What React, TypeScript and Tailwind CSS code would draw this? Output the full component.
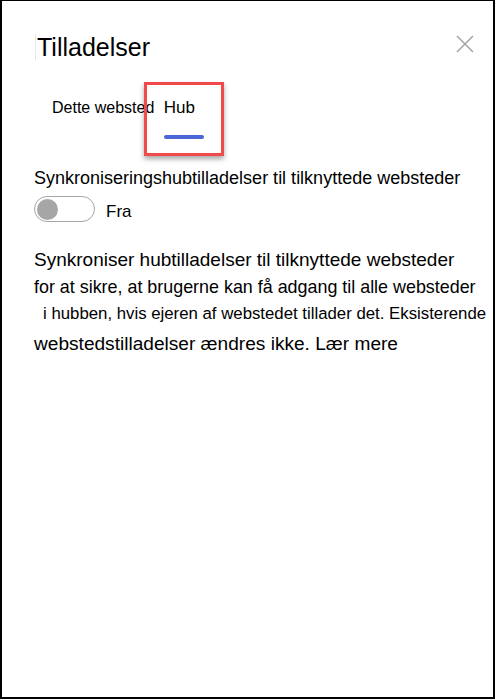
import React from "react";

export default function App() {
  return (
    <div
      className="w-[496px] h-[700px] bg-white"
      style={{ fontFamily: '"Liberation Sans", Arial, sans-serif' }}
    >
      <div className="w-[495px] h-[699px] border-x-2 border-b-2 border-t border-black flex flex-col text-black">
        <div className="flex items-start justify-between pt-[31px] pl-[33px] pr-[18px]">
          <div className="flex items-center">
            <span className="w-px h-[26px] bg-[#e6e6e6] mr-px" />
            <h1 className="text-[25px] leading-[30px] font-normal">Tilladelser</h1>
          </div>
          <svg width="20" height="20" viewBox="0 0 20 20" className="mt-[2px]">
            <path d="M2 2 L18 18 M18 2 L2 18" stroke="#a6a6a6" strokeWidth="1.6" />
          </svg>
        </div>

        <div className="flex items-start pl-[50px] mt-[20px]">
          <span className="text-[16px] leading-[20px] mt-[16px]">Dette websted</span>
          <div className="relative ml-[-10px] w-[80px] h-[74px] border-[3px] border-[#f04a4a] shadow-[0_3px_5px_rgba(0,0,0,0.35)] flex flex-col items-center">
            <span className="text-[17px] leading-[20px] mt-[13px] mr-[10px]">Hub</span>
            <span className="w-[40px] h-[4px] rounded-full bg-[#4a67d6] mt-[17px]" />
          </div>
        </div>

        <div className="pl-[32px] mt-[12px] text-[18px] leading-[20px] whitespace-nowrap">
          Synkroniseringshubtilladelser til tilknyttede websteder
        </div>

        <div className="flex items-start pl-[32px] mt-[8px]">
          <div className="w-[61px] h-[26px] rounded-full border border-[#a6a6a6] flex items-center px-[2px]">
            <span className="w-[21px] h-[21px] rounded-full bg-[#a6a6a6]" />
          </div>
          <span className="ml-[11px] text-[17px] leading-[20px] mt-[6px]">Fra</span>
        </div>

        <div className="pl-[32px] mt-[26px] flex flex-col">
          <span className="text-[19px] leading-[24px] whitespace-nowrap">
            Synkroniser hubtilladelser til tilknyttede websteder
          </span>
          <span className="text-[17.9px] leading-[24px] mt-[3px] whitespace-nowrap">
            for at sikre, at brugerne kan få adgang til alle websteder
          </span>
          <span className="text-[16.8px] leading-[24px] mt-[3px] pl-[9px] whitespace-nowrap">
            i hubben, hvis ejeren af webstedet tillader det. Eksisterende
          </span>
          <span className="text-[19.1px] leading-[24px] mt-[6px] whitespace-nowrap">
            webstedstilladelser ændres ikke. Lær mere
          </span>
        </div>
      </div>
    </div>
  );
}
